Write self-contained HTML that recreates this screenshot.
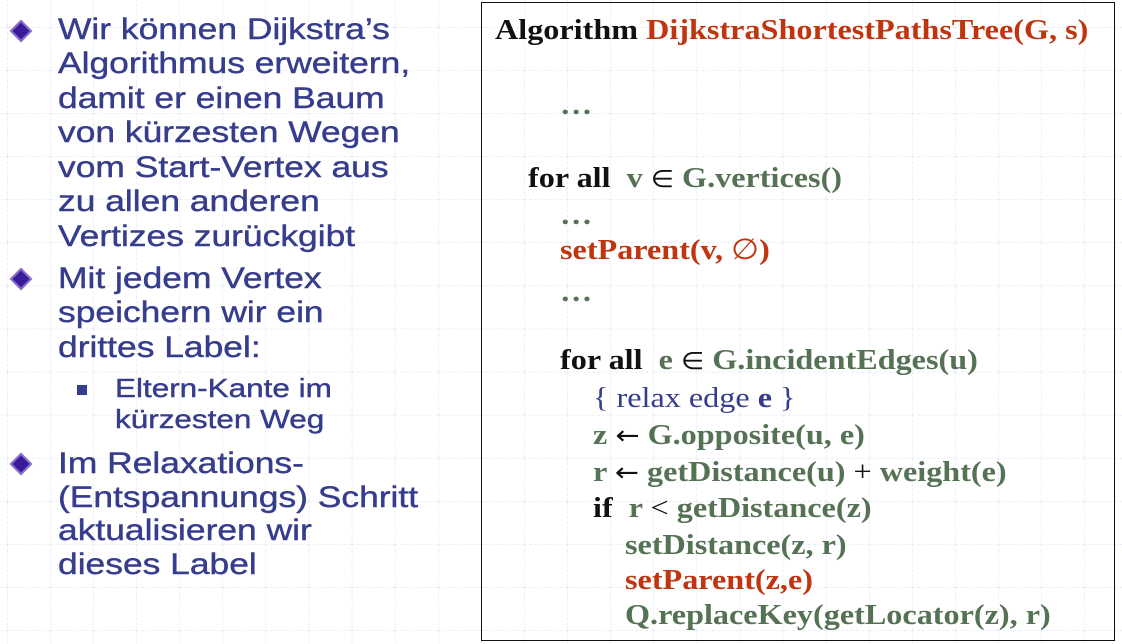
<!DOCTYPE html>
<html><head><meta charset="utf-8"><style>
body{margin:0;width:1122px;height:644px;overflow:hidden;background:#fff;position:relative;}
.grid{position:absolute;inset:0;}
.l{position:absolute;font-family:"Liberation Sans",sans-serif;color:#363d8c;white-space:nowrap;transform-origin:0 0;-webkit-text-stroke:0.4px #363d8c}
.b{font-size:29.5px;line-height:34.5px;left:58px;transform:scaleX(1.2)}
.s{font-size:26px;line-height:31px;left:115px;transform:scaleX(1.21)}
.box{position:absolute;left:481px;top:2px;width:632px;height:637px;border:1.5px solid #111;}
.c{position:absolute;font-family:"Liberation Serif",serif;font-weight:bold;font-size:29px;line-height:26px;white-space:nowrap;color:#111;transform:scaleX(1.11);transform-origin:0 0}
.g{color:#557354}.r{color:#c0350f}.n{font-weight:normal}.bl{color:#363d8c}
.ar{font-weight:normal;color:#111;font-family:"DejaVu Sans",sans-serif;font-size:26px}
.el{font-weight:normal;font-size:24px}
.dia{position:absolute;left:13px;width:16px;height:16px;transform:rotate(45deg);background:#3a1a9a;border:2px solid #8a6ccc;box-sizing:border-box}
.sq{position:absolute;left:77px;width:10px;height:10px;background:#363d8c}
</style></head><body>
<svg class="grid" width="1122" height="644">
<defs><pattern id="p" width="43.1" height="43.1" patternUnits="userSpaceOnUse" x="7" y="27">
<path d="M0 0V43.1M0 0H43.1" stroke="#d6def6" stroke-width="1" stroke-dasharray="3 2" fill="none"/></pattern></defs>
<rect width="1122" height="644" fill="url(#p)"/></svg>
<div class="dia" style="top:23px"></div>
<div class="dia" style="top:271px"></div>
<div class="dia" style="top:456px"></div>
<div class="sq" style="top:385px"></div>
<div class="l b" style="top:13px">Wir können Dijkstra’s</div>
<div class="l b" style="top:47px">Algorithmus erweitern,</div>
<div class="l b" style="top:82px">damit er einen Baum</div>
<div class="l b" style="top:116px">von kürzesten Wegen</div>
<div class="l b" style="top:151px">vom Start-Vertex aus</div>
<div class="l b" style="top:185px">zu allen anderen</div>
<div class="l b" style="top:220px">Vertizes zurückgibt</div>
<div class="l b" style="top:262px">Mit jedem Vertex</div>
<div class="l b" style="top:296px">speichern wir ein</div>
<div class="l b" style="top:331px">drittes Label:</div>
<div class="l s" style="top:373px">Eltern-Kante im</div>
<div class="l s" style="top:404px">kürzesten Weg</div>
<div class="l b" style="top:447px">Im Relaxations-</div>
<div class="l b" style="top:481px">(Entspannungs) Schritt</div>
<div class="l b" style="top:514px">aktualisieren wir</div>
<div class="l b" style="top:548px">dieses Label</div>
<div class="box"></div>
<div class="c" style="left:495px;top:17px">Algorithm <span class="r">DijkstraShortestPathsTree(G, s)</span></div>
<div class="c g" style="left:560px;top:92px">…</div>
<div class="c" style="left:528px;top:165px">for all&nbsp; <span class="g">v</span> <span class="el">∈</span> <span class="g">G.vertices()</span></div>
<div class="c g" style="left:560px;top:202px">…</div>
<div class="c r" style="left:560px;top:237px">setParent(v, <span class="n">∅</span>)</div>
<div class="c g" style="left:560px;top:279px">…</div>
<div class="c" style="left:560px;top:347px">for all&nbsp; <span class="g">e</span> <span class="el">∈</span> <span class="g">G.incidentEdges(u)</span></div>
<div class="c n bl" style="left:593px;top:385px">{ relax edge <b>e</b> }</div>
<div class="c g" style="left:593px;top:422px">z <span class="ar">←</span> G.opposite(u, e)</div>
<div class="c g" style="left:593px;top:459px">r <span class="ar">←</span> getDistance(u) <span class="n" style="color:#111">+</span> weight(e)</div>
<div class="c" style="left:593px;top:495px">if&nbsp; <span class="g">r</span> <span class="n">&lt;</span> <span class="g">getDistance(z)</span></div>
<div class="c g" style="left:625px;top:532px">setDistance(z, r)</div>
<div class="c r" style="left:625px;top:567px">setParent(z,e)</div>
<div class="c g" style="left:625px;top:602px">Q.replaceKey(getLocator(z), r)</div>
</body></html>
